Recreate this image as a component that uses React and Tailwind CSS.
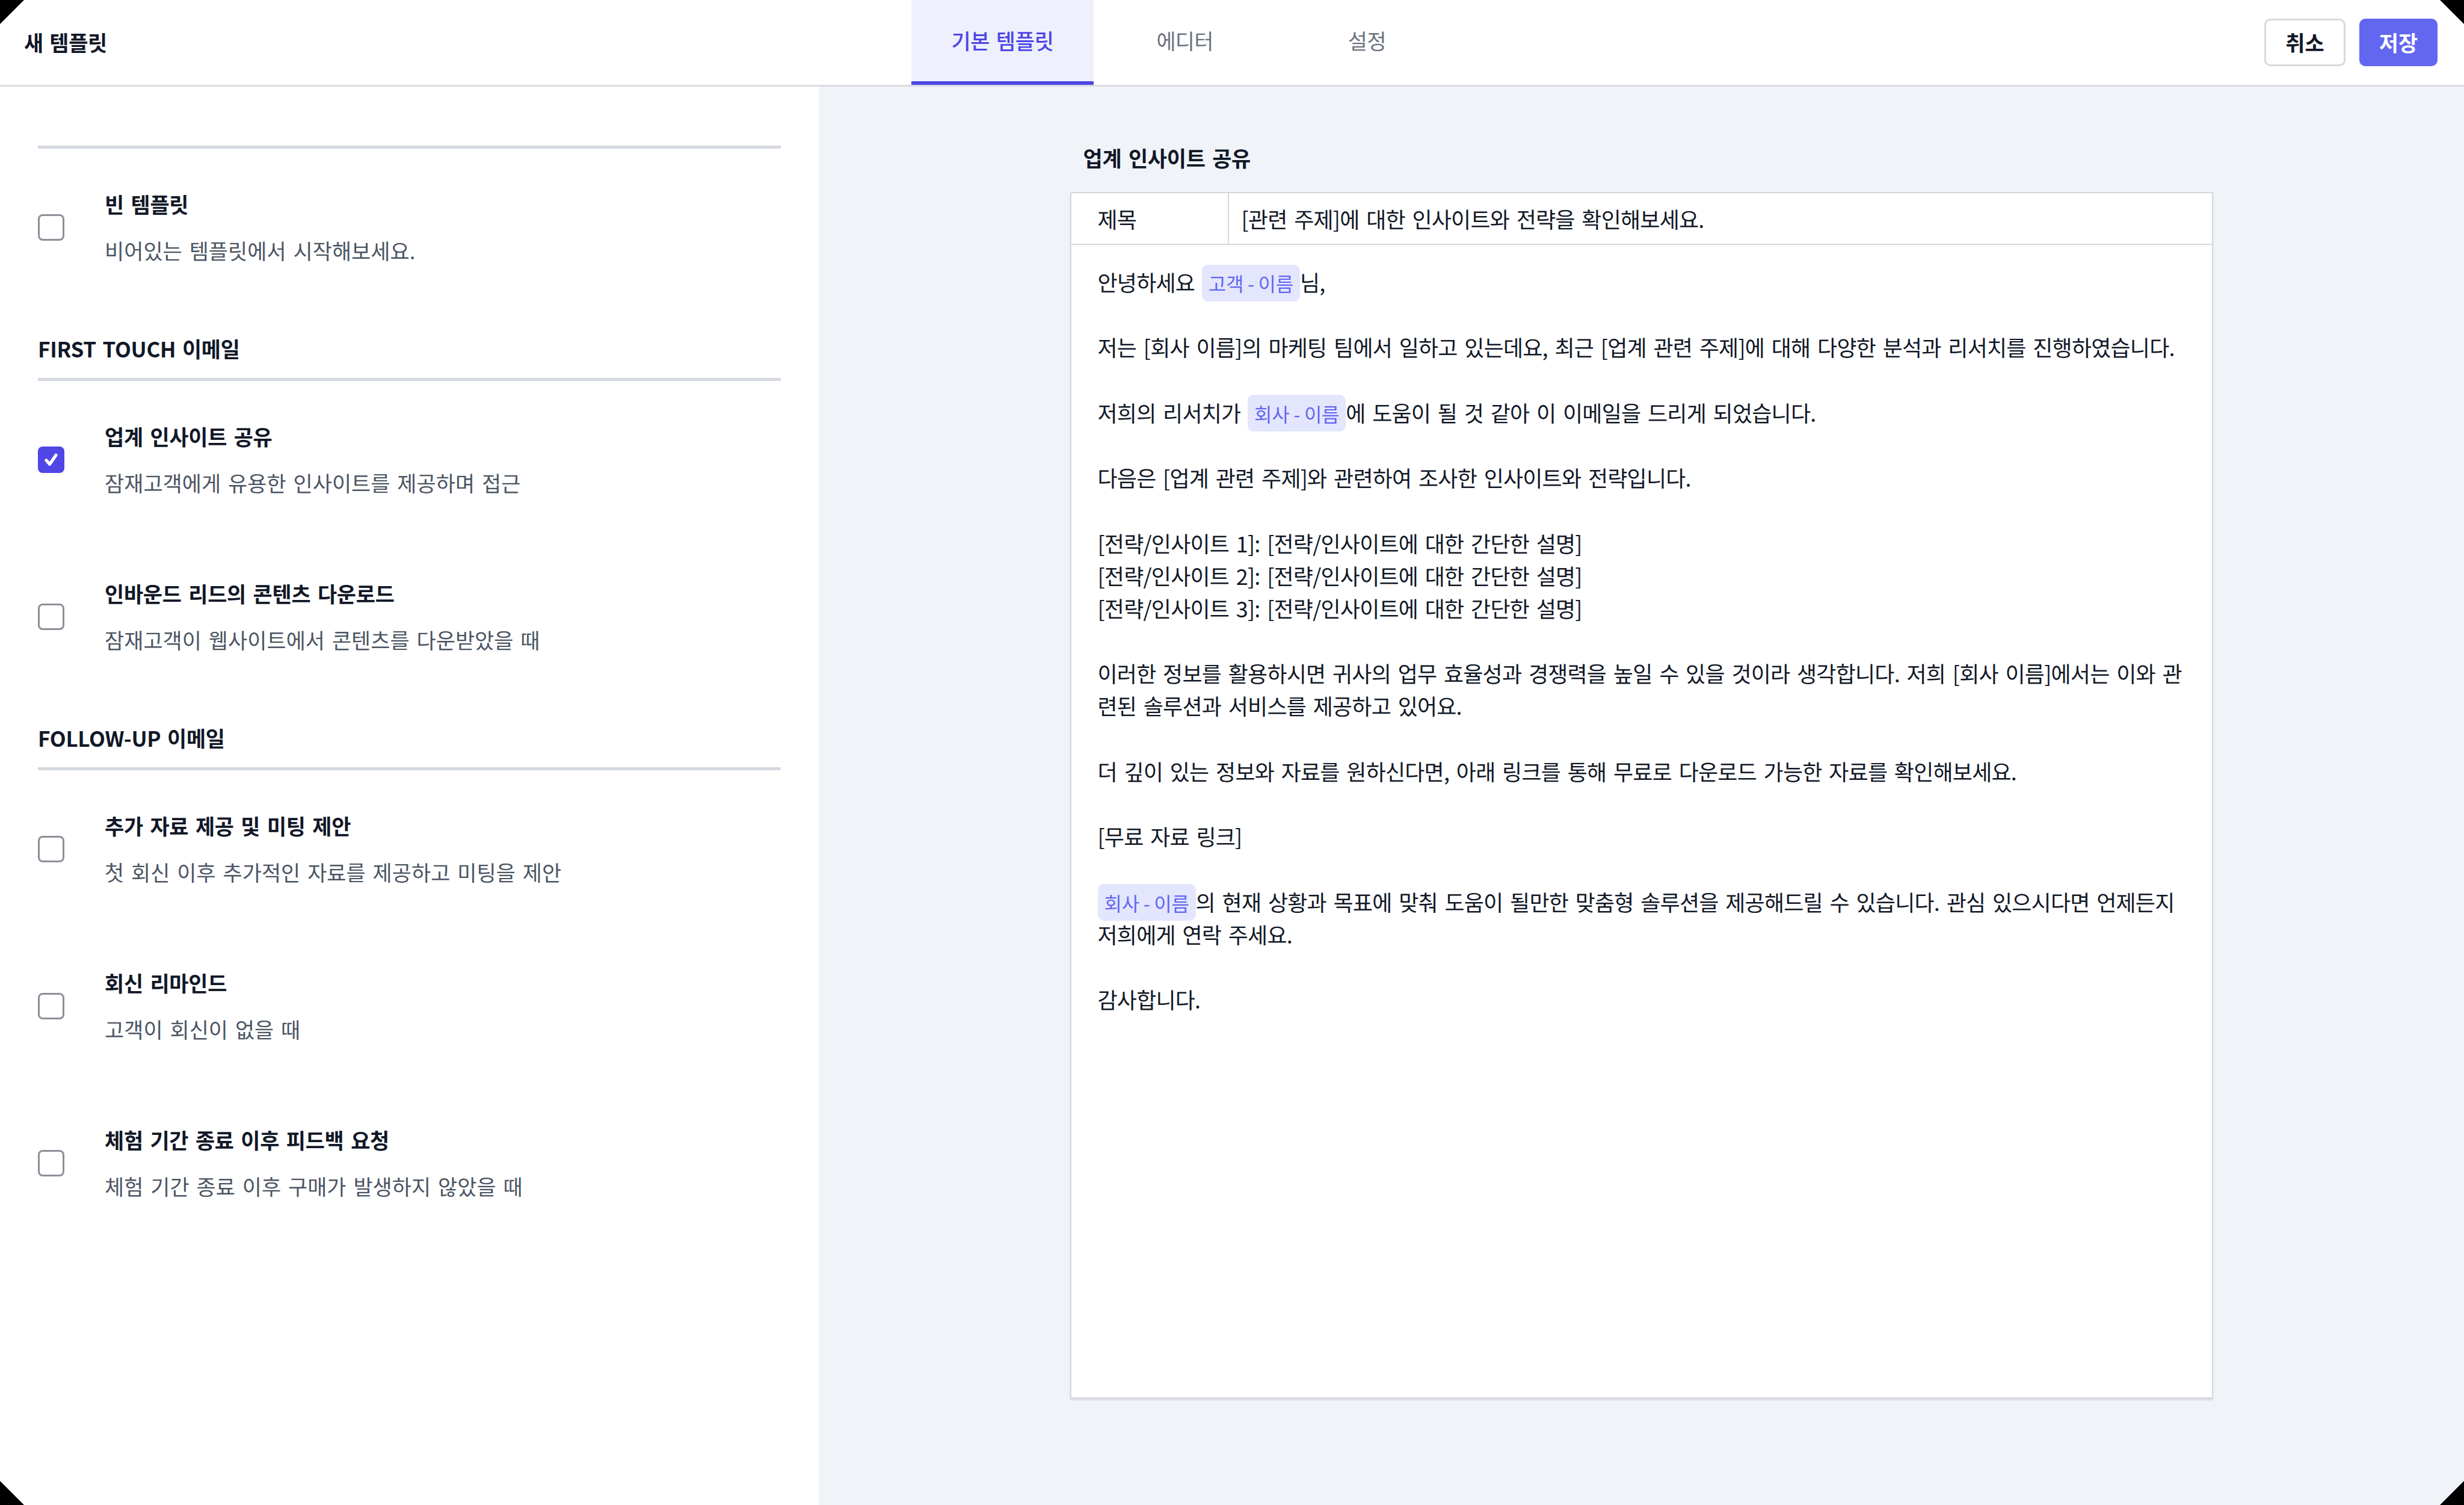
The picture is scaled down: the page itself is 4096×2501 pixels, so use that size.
import React from "react";

const sections = [
  {
    title: "",
    items: [{ t: "빈 템플릿", d: "비어있는 템플릿에서 시작해보세요.", c: false }],
  },
  {
    title: "FIRST TOUCH 이메일",
    items: [
      { t: "업계 인사이트 공유", d: "잠재고객에게 유용한 인사이트를 제공하며 접근", c: true },
      { t: "인바운드 리드의 콘텐츠 다운로드", d: "잠재고객이 웹사이트에서 콘텐츠를 다운받았을 때", c: false },
    ],
  },
  {
    title: "FOLLOW-UP 이메일",
    items: [
      { t: "추가 자료 제공 및 미팅 제안", d: "첫 회신 이후 추가적인 자료를 제공하고 미팅을 제안", c: false },
      { t: "회신 리마인드", d: "고객이 회신이 없을 때", c: false },
      { t: "체험 기간 종료 이후 피드백 요청", d: "체험 기간 종료 이후 구매가 발생하지 않았을 때", c: false },
    ],
  },
];

function Chip({ children }) {
  return (
    <span className="inline-flex items-center h-[61px] -my-[6px] px-[11px] rounded-[10px] bg-[#e3e6fd] text-[#6366f1] text-[32px] tracking-[-0.3px] [word-spacing:0px]">
      {children}
    </span>
  );
}

function Checkbox({ checked }) {
  if (checked) {
    return (
      <div className="w-[44px] h-[44px] shrink-0 rounded-[8px] bg-[#4f46e5] flex items-center justify-center">
        <svg width="36" height="36" viewBox="0 0 16 16" fill="none">
          <path d="M4.4 8.4L6.9 11.3L11.6 4.6" stroke="white" strokeWidth="2.3" strokeLinecap="round" strokeLinejoin="round" />
        </svg>
      </div>
    );
  }
  return <div className="w-[44px] h-[44px] shrink-0 rounded-[8px] border-[3px] border-[#8b9099] bg-white" />;
}

function Corner({ pos }) {
  const map = {
    tl: { cls: "top-0 left-0", pts: "0,0 40,0 0,40" },
    tr: { cls: "top-0 right-0", pts: "0,0 40,0 40,40" },
    bl: { cls: "bottom-0 left-0", pts: "0,0 0,40 40,40" },
    br: { cls: "bottom-0 right-0", pts: "40,0 40,40 0,40" },
  };
  const m = map[pos];
  return (
    <svg className={"absolute " + m.cls} width="40" height="40" viewBox="0 0 40 40">
      <polygon points={m.pts} fill="black" />
    </svg>
  );
}

const L = "h-[54.2px] whitespace-nowrap";
const Blank = () => <div className="h-[54.2px]" />;

export default function App() {
  return (
    <div className="relative w-[4096px] h-[2501px] flex flex-col bg-white text-[#111827] font-['Noto_Sans_CJK_KR','Noto_Sans',sans-serif] overflow-hidden">
      {/* Header */}
      <header className="h-[144px] shrink-0 flex items-stretch border-b-[3px] border-[#d9dce1] bg-white">
        <div className="w-[1515px] shrink-0 flex items-center pl-[40px]">
          <span className="text-[35px] font-bold tracking-[-0.4px] [word-spacing:3px]">새 템플릿</span>
        </div>
        <nav className="flex items-stretch">
          <div className="w-[303px] flex items-center justify-center bg-[#eef0fd] border-b-[6px] border-[#4f46e5] text-[#4f46e5] text-[35px] font-medium tracking-[-0.3px] [word-spacing:3px]">
            기본 템플릿
          </div>
          <div className="w-[303px] flex items-center justify-center text-[#6b7280] text-[35px] tracking-[-0.8px] pb-[6px]">
            에디터
          </div>
          <div className="w-[303px] flex items-center justify-center text-[#6b7280] text-[35px] tracking-[-0.5px] pb-[6px]">
            설정
          </div>
        </nav>
        <div className="flex-1 flex items-center justify-end gap-[23px] pr-[44px]">
          <button className="w-[135px] h-[79px] rounded-[10px] border-[3px] border-[#d7dade] bg-white text-[35px] font-bold text-[#111827]">
            취소
          </button>
          <button className="w-[130px] h-[79px] rounded-[10px] bg-[#6366f1] text-[35px] font-bold text-white">
            저장
          </button>
        </div>
      </header>

      <main className="flex-1 flex min-h-0">
        {/* Left panel */}
        <aside className="w-[1361px] shrink-0 bg-white px-[63px] pt-[23px]">
          {sections.map((s, si) => (
            <section key={si} className={si === 0 ? "" : "mt-[45px]"}>
              <div className="border-b-[5px] border-[#d5d9e0] pb-[23px]">
                <div className="h-[52px] leading-[52px] text-[35px] font-bold tracking-[-0.3px] [word-spacing:3px]">
                  {s.title}
                </div>
              </div>
              {s.items.map((it, ii) => (
                <div key={ii} className="flex items-center py-[66px]">
                  <Checkbox checked={it.c} />
                  <div className="ml-[67px]">
                    <div className="h-[52px] leading-[52px] text-[35px] font-bold tracking-[-0.3px] [word-spacing:4px] whitespace-nowrap">
                      {it.t}
                    </div>
                    <div className="mt-[25px] h-[52px] leading-[52px] text-[35px] text-[#4b5563] [word-spacing:4px] whitespace-nowrap">
                      {it.d}
                    </div>
                  </div>
                </div>
              ))}
            </section>
          ))}
        </aside>

        {/* Right panel */}
        <div className="flex-1 bg-[#f0f3f8] pt-[92px]">
          <div className="w-[1900px] mx-auto">
            <div className="h-[52px] leading-[52px] pl-[22px] mb-[31px] text-[35px] font-bold tracking-[-0.3px] [word-spacing:4px]">
              업계 인사이트 공유
            </div>
            <div className="h-[2005px] bg-white border-2 border-[#d5d9df] shadow-[0_3px_3px_rgba(0,0,0,0.10)] flex flex-col">
              <div className="h-[86px] shrink-0 flex border-b-2 border-[#d5d9df]">
                <div className="w-[262px] shrink-0 border-r-2 border-[#d5d9df] pl-[44px] flex items-center text-[36px] tracking-[-0.8px]">
                  제목
                </div>
                <div className="flex-1 pl-[21px] flex items-center text-[36px] tracking-[-0.8px] [word-spacing:4.4px] whitespace-nowrap">
                  [관련 주제]에 대한 인사이트와 전략을 확인해보세요.
                </div>
              </div>
              <div className="pt-[34px] pl-[44px] text-[36px] tracking-[-0.8px] leading-[54.2px] [word-spacing:4.4px]">
                <div className={L}>
                  안녕하세요 <Chip>고객 - 이름</Chip>님,
                </div>
                <Blank />
                <div className={L}>
                  저는 [회사 이름]의 마케팅 팀에서 일하고 있는데요, 최근 [업계 관련 주제]에 대해 다양한 분석과 리서치를 진행하였습니다.
                </div>
                <Blank />
                <div className={L}>
                  저희의 리서치가 <Chip>회사 - 이름</Chip>에 도움이 될 것 같아 이 이메일을 드리게 되었습니다.
                </div>
                <Blank />
                <div className={L}>다음은 [업계 관련 주제]와 관련하여 조사한 인사이트와 전략입니다.</div>
                <Blank />
                <div className={L}>[전략/인사이트 1]: [전략/인사이트에 대한 간단한 설명]</div>
                <div className={L}>[전략/인사이트 2]: [전략/인사이트에 대한 간단한 설명]</div>
                <div className={L}>[전략/인사이트 3]: [전략/인사이트에 대한 간단한 설명]</div>
                <Blank />
                <div className={L}>
                  이러한 정보를 활용하시면 귀사의 업무 효율성과 경쟁력을 높일 수 있을 것이라 생각합니다. 저희 [회사 이름]에서는 이와 관
                </div>
                <div className={L}>련된 솔루션과 서비스를 제공하고 있어요.</div>
                <Blank />
                <div className={L}>
                  더 깊이 있는 정보와 자료를 원하신다면, 아래 링크를 통해 무료로 다운로드 가능한 자료를 확인해보세요.
                </div>
                <Blank />
                <div className={L}>[무료 자료 링크]</div>
                <Blank />
                <div className={L}>
                  <Chip>회사 - 이름</Chip>의 현재 상황과 목표에 맞춰 도움이 될만한 맞춤형 솔루션을 제공해드릴 수 있습니다. 관심 있으시다면 언제든지
                </div>
                <div className={L}>저희에게 연락 주세요.</div>
                <Blank />
                <div className={L}>감사합니다.</div>
              </div>
            </div>
          </div>
        </div>
      </main>

      <Corner pos="tl" />
      <Corner pos="tr" />
      <Corner pos="bl" />
      <Corner pos="br" />
    </div>
  );
}
